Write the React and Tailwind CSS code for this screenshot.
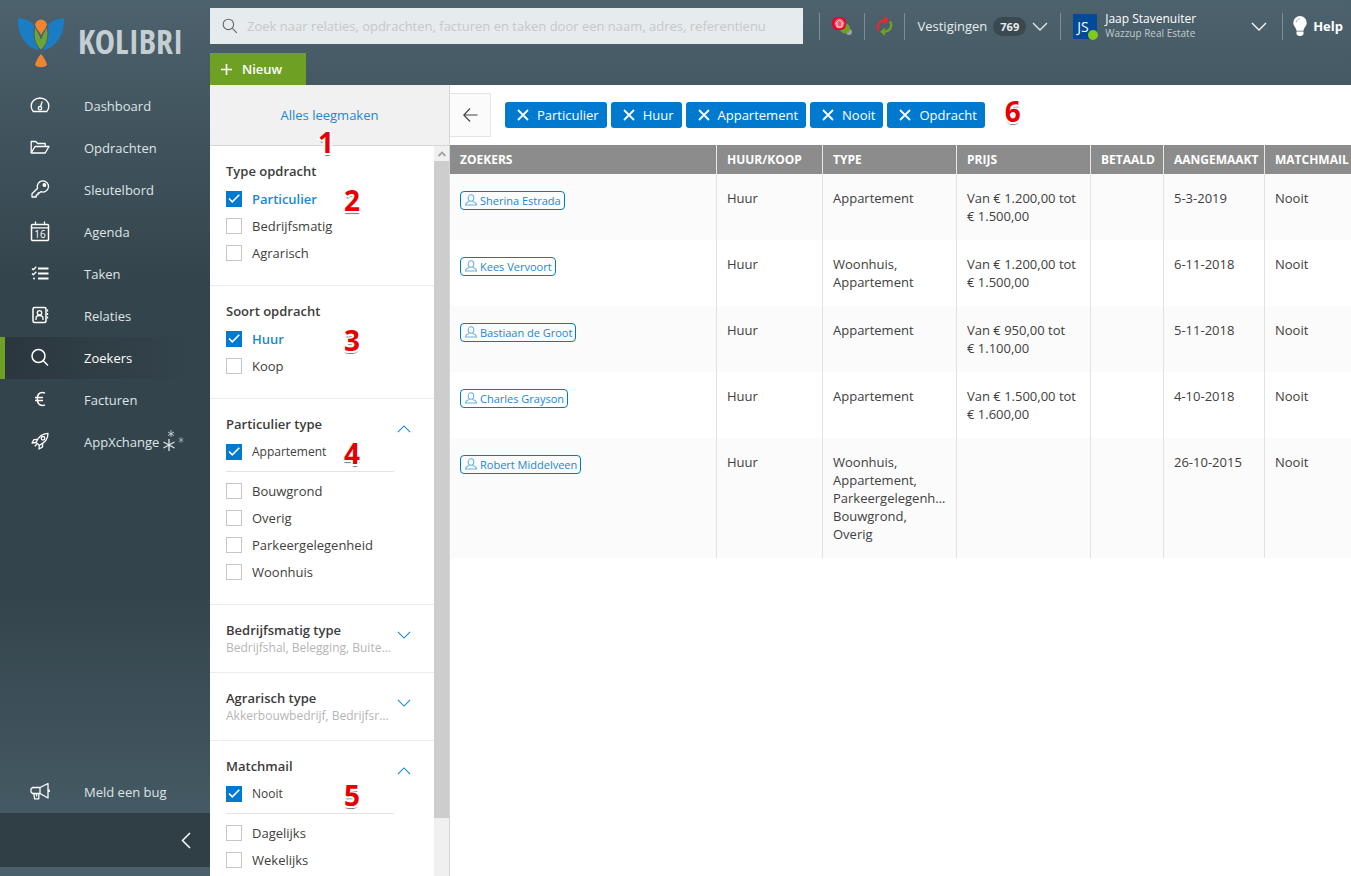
import { useState } from 'react';

const navItems = [
  { label: 'Dashboard', icon: 'dashboard' },
  { label: 'Opdrachten', icon: 'folder' },
  { label: 'Sleutelbord', icon: 'key' },
  { label: 'Agenda', icon: 'calendar' },
  { label: 'Taken', icon: 'tasks' },
  { label: 'Relaties', icon: 'contacts' },
  { label: 'Zoekers', icon: 'search' },
  { label: 'Facturen', icon: 'euro' },
  { label: 'AppXchange', icon: 'rocket' },
];

const filters = [
  { title: 'Type opdracht', options: ['Particulier', 'Bedrijfsmatig', 'Agrarisch'], highlight: true, note: 2 },
  { title: 'Soort opdracht', options: ['Huur', 'Koop'], highlight: true, note: 3 },
  { title: 'Particulier type', pinned: 'Appartement', options: ['Bouwgrond', 'Overig', 'Parkeergelegenheid', 'Woonhuis'], note: 4 },
  { title: 'Bedrijfsmatig type', summary: 'Bedrijfshal, Belegging, Buitenterrein, Horeca' },
  { title: 'Agrarisch type', summary: 'Akkerbouwbedrijf, Bedrijfsruimte, Tuinbouw' },
  { title: 'Matchmail', pinned: 'Nooit', options: ['Dagelijks', 'Wekelijks'], note: 5 },
];

const chips = ['Particulier', 'Huur', 'Appartement', 'Nooit', 'Opdracht'];

const seekers = [
  { name: 'Sherina Estrada', types: ['Appartement'], price: ['Van € 1.200,00 tot', '€ 1.500,00'], created: '5-3-2019' },
  { name: 'Kees Vervoort', types: ['Woonhuis,', 'Appartement'], price: ['Van € 1.200,00 tot', '€ 1.500,00'], created: '6-11-2018' },
  { name: 'Bastiaan de Groot', types: ['Appartement'], price: ['Van € 950,00 tot', '€ 1.100,00'], created: '5-11-2018' },
  { name: 'Charles Grayson', types: ['Appartement'], price: ['Van € 1.500,00 tot', '€ 1.600,00'], created: '4-10-2018' },
  { name: 'Robert Middelveen', types: ['Woonhuis,', 'Appartement,', 'Parkeergelegenheid,', 'Bouwgrond,', 'Overig'], price: [], created: '26-10-2015' },
];

const iconShapes = {
  dashboard: (
    <>
      <path d="M3.200 16.500A8.600 8.600 0 0 1 1.200 11a8.800 8 0 0 1 17.600 0 8.600 8.600 0 0 1-2 5.500z" />
      <circle cx="10" cy="13.200" r="1.700" />
      <path d="M10.600 11.500 12.200 6.500" />
    </>
  ),
  folder: (
    <>
      <path d="M1.200 16V4.500h4.500l2 2h7.500V9" />
      <path d="M1.200 16 5 9.500h14L15.200 16z" />
    </>
  ),
  key: (
    <>
      <path d="M7.600 9.200a5.600 5.600 0 1 1 3.200 3.400L9.500 14H8v1.800H6.200V18H2v-3.200z" />
      <circle cx="14.400" cy="6" r="1.300" fill="currentColor" />
    </>
  ),
  calendar: (
    <>
      <rect x="1.500" y="3.500" width="17" height="16" rx="1" strokeWidth="1.500" />
      <path d="M2 6.800h16M5.500.500v3M14.500.500v3" />
      <text x="10" y="17" fontSize="10" textAnchor="middle" fill="currentColor" stroke="none">16</text>
    </>
  ),
  tasks: (
    <>
      <path d="M8 5.500h10.500M8 10.500h10.500M8 15.500h10.500" strokeWidth="1.800" />
      <path d="m2 5.500 1.300 1.300 3-3M2 10.500l1.300 1.300 3-3" />
      <circle cx="4" cy="15.500" r="1" fill="currentColor" stroke="none" />
    </>
  ),
  contacts: (
    <>
      <rect x="3" y="2.500" width="13" height="15" rx="1.500" strokeWidth="1.500" />
      <circle cx="9.500" cy="7.800" r="2.200" />
      <path d="M6 15v-1.500c0-1.800 1.200-3 3.500-3s3.500 1.200 3.500 3V15M17.500 4.500v2M17.500 8v2M17.500 11.500v2" />
    </>
  ),
  search: (
    <>
      <circle cx="8.500" cy="9" r="6.500" strokeWidth="1.500" />
      <path d="m13.300 13.800 4.700 4.700" strokeWidth="1.500" />
    </>
  ),
  euro: <path d="M15 4.200a6 6 0 0 0-2.500-.6C9.300 3.600 7.300 6 7.300 10s2 6.400 5.200 6.400c1 0 1.800-.2 2.500-.6M5 8.500h8M5 11.500h8" strokeWidth="1.500" />,
  rocket: (
    <>
      <path d="M6 11.500C8 6.500 12 2.500 18 2.300c.1 5.500-3.700 9.700-8.700 12z" />
      <circle cx="13" cy="7.300" r="1.800" />
      <path d="M7.500 8.500 3.800 8.700 2 12l4-.5M9.300 14.300 9 18l3.500-2 .2-3.800M6.800 13.300l-2 2" />
    </>
  ),
  megaphone: (
    <>
      <path d="M2.500 6.500H10v6H2.500L1 11V8z" />
      <path d="M10 6.500 18 2.500v14.500l-8-4.500M3.800 12.500l.8 5.300h4.200v-5.300M6.500 12.500v3M19.200 8.500v2.500" />
    </>
  ),
};

const NavIcon = ({ name }) => (
  <svg viewBox="0 1 20 20" className="h-5 w-5 shrink-0 overflow-visible text-white" fill="none" stroke="currentColor" strokeWidth="1.3" strokeLinejoin="round" aria-hidden="true">
    {iconShapes[name]}
  </svg>
);

const chevronPaths = {
  down: 'm1 1 7 7 7-7',
  up: 'm1 8 7-7 7 7',
};

const Chevron = ({ direction = 'down', className }) => (
  <svg viewBox="0 0 16 9" className={className} fill="none" stroke="currentColor" strokeWidth="1.3" aria-hidden="true">
    <path d={chevronPaths[direction]} />
  </svg>
);

const Note = ({ value, className }) => (
  <span
    aria-hidden="true"
    className={`pointer-events-none absolute z-10 text-[28px] leading-7 font-bold text-[#e60000] [text-shadow:1px_0_#fff,-1px_0_#fff,0_1px_#fff,0_-1px_#fff,2px_1px_#fff,-2px_1px_#fff,1px_2px_#fff,-1px_2px_#fff,0_3px_1px_#777] ${className}`}
  >
    {value}
  </span>
);

const Logo = () => (
  <a href="#" className="flex h-[85px] items-center pl-[18px]" aria-label="Kolibri">
    <svg viewBox="0 0 46 52" className="h-[52px] w-[46px]" aria-hidden="true">
      <path d="M0 1c8 1 14 4 16 7-1 9 0 17 5 25C9 31-1 18 0 1z" fill="#1b7dc4" />
      <path d="M46 1c-8 1-14 4-16 7 1 9 0 17-5 25C37 31 47 18 46 1z" fill="#1b7dc4" />
      <path d="M17 8c1-7 11-7 12 0-1 4-4 6-6 10-2-4-5-6-6-10z" fill="#ee8532" />
      <path d="M17 9c-2 9-1 18 6 24 7-6 8-15 6-24-1 4-4 6-6 13-2-7-5-9-6-13z" fill="#6ba53a" stroke="#4a5f6a" strokeWidth="1" />
      <path d="M23 37c-3 3-5 7-6 11 3 3 9 3 12 0-1-4-3-8-6-11z" fill="#ee8532" />
    </svg>
    <span className="mb-1 ml-[14px] font-['Open_Sans_Condensed','Liberation_Sans_Narrow','Open_Sans',sans-serif] text-[34px] leading-9 font-bold text-[#c5ced3]">KOLIBRI</span>
  </a>
);

const Sidebar = () => (
  <aside className="flex w-[210px] shrink-0 flex-col">
    <Logo />
    <nav className="flex flex-1 flex-col">
      {navItems.map(item => (
        <a
          key={item.label}
          href="#"
          className={`flex h-[42px] items-center border-l-[5px] pl-[25px] ${item.label === 'Zoekers' ? 'border-[#6ea123] bg-linear-to-r from-[#2b373e] to-transparent to-90% text-white' : 'border-transparent text-[#dfe4e6]'}`}
        >
          <NavIcon name={item.icon} />
          <span className="ml-[34px]">{item.label}</span>
          {item.icon === 'rocket' && (
            <svg viewBox="0 0 22 24" className="ml-[3px] h-6 w-[22px]" fill="none" stroke="#dfe4e6" aria-hidden="true">
              <path d="M7 9v12M1.500 12l11 6M12.500 12l-11 6" strokeWidth="1.300" />
              <path d="M9 0v7M6 2l6 3.500M12 2 6 5.500" opacity=".8" />
              <path d="M19 7v6M16.500 8.500l5 3M21.500 8.500l-5 3" opacity=".5" />
            </svg>
          )}
        </a>
      ))}
      <a href="#" className="mt-auto flex h-[42px] items-center pl-[30px] text-[#dfe4e6]">
        <NavIcon name="megaphone" />
        <span className="ml-[34px]">Meld een bug</span>
      </a>
    </nav>
    <button aria-label="Menu inklappen" className="mb-[9px] flex h-[54px] items-center justify-end bg-[#303e45] pr-[19px] text-white">
      <svg viewBox="0 0 10 17" className="h-[17px] w-[10px]" fill="none" stroke="currentColor" strokeWidth="1.500" aria-hidden="true">
        <path d="m9 1-7.500 7.500L9 16" />
      </svg>
    </button>
  </aside>
);

const Divider = () => <div className="h-[27px] w-px bg-[#7d8c95]" />;

const Header = () => (
  <header className="h-[85px] shrink-0 pt-2">
    <div className="flex h-9 items-center">
      <label className="flex h-9 flex-1 items-center bg-[#e6ebee] pl-3">
        <svg viewBox="0 0 20 20" className="h-4 w-4 text-[#666]" fill="none" stroke="currentColor" strokeWidth="1.400" aria-hidden="true">
          <circle cx="8" cy="8" r="6.500" />
          <path d="m13 13 5.500 5.500" />
        </svg>
        <input
          type="text"
          aria-label="Zoeken"
          placeholder="Zoek naar relaties, opdrachten, facturen en taken door een naam, adres, referentienu"
          className="ml-[9px] min-w-0 flex-1 bg-transparent outline-none placeholder:text-[#c5c8ca]"
        />
      </label>
      <div className="flex items-center pr-2 pl-4 text-[#e8ecee]">
        <Divider />
        <button aria-label="Berichten" className="mx-3 h-5 w-5">
          <svg viewBox="0 0 20 20" aria-hidden="true">
            <circle cx="17" cy="16" r="3" fill="#9aa3a8" />
            <circle cx="13" cy="12.500" r="5" fill="#6ea123" />
            <rect x="0" y="1" width="14" height="13" rx="5.500" fill="#e2062c" />
            <circle cx="7.500" cy="7.500" r="5" fill="#ec5a6e" />
            <path d="m3.500 7.500 4-3.500 4 3.500M5 7v4h5V7" fill="none" stroke="#fff" strokeWidth=".8" />
          </svg>
        </button>
        <Divider />
        <button aria-label="Synchroniseren" className="mx-[11px] h-5 w-[17px]">
          <svg viewBox="0 0 17 20" fill="none" strokeWidth="2.400" aria-hidden="true">
            <path d="M3 14.500C.500 11 2 4.500 9 4.300" stroke="#e22a30" />
            <path d="M8 0v8.600l5-4.300z" fill="#e22a30" />
            <path d="M14 5.500c2.500 3.500 1 10-6 10.200" stroke="#6ea123" />
            <path d="M9 11.400V20l-5-4.300z" fill="#6ea123" />
          </svg>
        </button>
        <Divider />
        <button className="mx-3 flex items-center">
          <span>Vestigingen</span>
          <span className="mx-1.5 rounded-full bg-[#3a4850] px-[7px] text-[11px] leading-[19px] font-bold">769</span>
          <Chevron className="h-[9px] w-4" />
        </button>
        <Divider />
        <button className="mr-[15px] ml-3 flex w-[194px] items-center text-left">
          <span className="relative h-[25px] w-6 bg-[#004a99] pl-1 text-[14px] leading-[25px] text-white">
            JS
            <span className="absolute -right-px -bottom-px h-[10px] w-[10px] rounded-full bg-[#82c91e]" />
          </span>
          <span className="ml-2 flex-1">
            <span className="block text-[12px] leading-[14px] text-white">Jaap Stavenuiter</span>
            <span className="block text-[10px] leading-[14px] text-[#c3cacd]">Wazzup Real Estate</span>
          </span>
          <Chevron className="h-[9px] w-4 text-white" />
        </button>
        <Divider />
        <a href="#" className="ml-[10px] flex items-center gap-1.5 font-bold text-white">
          <svg viewBox="0 0 14 20" className="h-5 w-[14px]" fill="currentColor" aria-hidden="true">
            <path d="M7 0a6.700 6.700 0 0 0-6.700 6.700c0 3.300 2.700 4.500 3.200 8h7c.5-3.500 3.200-4.700 3.200-8A6.700 6.700 0 0 0 7 0zM3.500 15.500h7v2.300c0 1-1.200 2.200-3.500 2.200s-3.500-1.200-3.500-2.200z" />
            <path d="M3.200 6.500C3.400 4.500 4.800 3 7 2.800" fill="none" stroke="#8fa0a8" strokeWidth=".8" />
          </svg>
          Help
        </a>
      </div>
    </div>
    <button className="mt-[9px] flex h-8 w-24 items-center gap-[10px] bg-[#6ea123] pl-[11px] font-semibold text-white">
      <svg viewBox="0 0 12 12" className="h-[11px] w-[11px]" stroke="currentColor" strokeWidth="1.700" aria-hidden="true">
        <path d="M6 0v12M0 6h12" />
      </svg>
      Nieuw
    </button>
  </header>
);

const FilterOption = ({ label, checked, onChange, className = '' }) => (
  <label className={`flex h-[27px] items-center gap-[10px] pb-px ${className}`}>
    <span className="grid">
      <input type="checkbox" checked={checked} onChange={onChange} className="peer col-start-1 row-start-1 h-4 w-4 appearance-none border border-[#c6c6c6] bg-white checked:border-[#007acf] checked:bg-[#007acf]" />
      <svg viewBox="0 0 16 16" className="pointer-events-none invisible col-start-1 row-start-1 h-4 w-4 peer-checked:visible" fill="none" stroke="#fff" strokeWidth="1.600" aria-hidden="true">
        <path d="m3 7.500 3.300 3.300 7-7" />
      </svg>
    </span>
    {label}
  </label>
);

const FilterSection = ({ filter, selected, onToggle }) => (
  <section className={`relative border-b border-[#ececec] pt-4 pl-4 ${filter.summary ? 'pb-[15px]' : 'pb-[18px]'}`}>
    <div className="flex pr-[23px]">
      <div className="min-w-0 flex-1">
        <h3 className="leading-[18px] font-semibold text-[#3c3c3c]">{filter.title}</h3>
        {filter.summary && <p className="w-[166px] truncate text-[12px] leading-[18px] text-[#b5b5b5]">{filter.summary}</p>}
      </div>
      {!filter.highlight && (
        <button aria-label={filter.title} className="h-[18px] pt-[10px] text-[#1a87d7]">
          <Chevron direction={filter.summary ? 'down' : 'up'} className="h-2 w-[14px]" />
        </button>
      )}
    </div>
    {filter.pinned && (
      <div className="mt-1.5 mr-10 mb-1.5 border-b border-[#e3e3e3] pb-[5px]">
        <FilterOption label={filter.pinned} checked={selected.includes(filter.pinned)} onChange={() => onToggle(filter.pinned)} className="text-[12px]" />
      </div>
    )}
    {filter.options && (
      <div className={filter.pinned ? '' : 'mt-1.5'}>
        {filter.options.map(option => (
          <FilterOption
            key={option}
            label={option}
            checked={selected.includes(option)}
            onChange={() => onToggle(option)}
            className={filter.highlight && selected.includes(option) ? 'font-semibold text-[#1a87d7]' : ''}
          />
        ))}
      </div>
    )}
    {filter.note && <Note value={filter.note} className="top-10 left-[134px]" />}
  </section>
);

const FilterPanel = () => {
  const [selected, setSelected] = useState(['Particulier', 'Huur', 'Appartement', 'Nooit']);

  const handleToggle = (option) => {
    setSelected(selected.includes(option) ? selected.filter(o => o !== option) : [...selected, option]);
  };

  return (
    <div className="flex w-60 shrink-0 flex-col border-r border-[#d6d6d6] bg-white">
      <div className="relative flex h-[61px] shrink-0 items-center justify-center border-b border-[#d6d6d6] bg-[#f1f1f1]">
        <button onClick={() => setSelected([])} className="text-[#1a87d7]">Alles leegmaken</button>
        <Note value={1} className="top-[43px] left-[108px]" />
      </div>
      <div className="flex min-h-0 flex-1">
        <div className="min-w-0 flex-1 overflow-hidden">
          {filters.map(filter => (
            <FilterSection key={filter.title} filter={filter} selected={selected} onToggle={handleToggle} />
          ))}
        </div>
        <div className="flex w-[15px] flex-col bg-[#f0f0f0]">
          <div className="flex h-[15px] items-center justify-center text-[#a3a3a3]">
            <svg viewBox="0 0 8 6" className="h-1.5 w-2" fill="none" stroke="currentColor" strokeWidth="1.800" aria-hidden="true">
              <path d="m.5 5 3.500-3.500L7.500 5" />
            </svg>
          </div>
          <div className="h-[90%] bg-[#cdcdcd]" />
        </div>
      </div>
    </div>
  );
};

const SeekerTable = () => (
  <table className="w-full table-fixed border-separate border-spacing-0 text-left">
    <colgroup>
      <col />
      <col className="w-[106px]" />
      <col className="w-[134px]" />
      <col className="w-[134px]" />
      <col className="w-[73px]" />
      <col className="w-[101px]" />
      <col className="w-[86px]" />
    </colgroup>
    <thead className="bg-[#8c8c8c] text-[12px] text-white">
      <tr className="h-[29px] *:border-r *:border-[#e6e6e6] *:pl-[10px] *:font-bold *:whitespace-nowrap *:last:border-r-0">
        <th>ZOEKERS</th>
        <th>HUUR/KOOP</th>
        <th>TYPE</th>
        <th>PRIJS</th>
        <th>BETAALD</th>
        <th>AANGEMAAKT</th>
        <th>MATCHMAIL</th>
      </tr>
    </thead>
    <tbody className="leading-[18px]">
      {seekers.map(seeker => (
        <tr key={seeker.name} className="align-top odd:bg-[#fbfbfb] *:border-r *:border-[#e2e2e2] *:px-[10px] *:py-[15px] *:last:border-r-0">
          <td>
            <a href="#" className="mt-0.5 inline-flex h-[19px] items-center gap-0.5 rounded border border-[#007acf] px-[3px] text-[11px] text-[#1a87d7]">
              <svg viewBox="0 0 14 14" className="h-[14px] w-[14px]" fill="none" stroke="#6db1e4" strokeWidth="1.100" aria-hidden="true">
                <ellipse cx="7" cy="4" rx="2.800" ry="3.200" />
                <path d="M5.500 7.500c-3 .8-4 1.500-4 3.500h11c0-2-1-2.700-4-3.500" />
              </svg>
              {seeker.name}
            </a>
          </td>
          <td>Huur</td>
          <td>{seeker.types.map(type => <div key={type} className="truncate">{type}</div>)}</td>
          <td>{seeker.price.map(line => <div key={line}>{line}</div>)}</td>
          <td></td>
          <td>{seeker.created}</td>
          <td>Nooit</td>
        </tr>
      ))}
    </tbody>
  </table>
);

const Results = () => (
  <main className="min-w-0 flex-1 bg-white">
    <div className="flex h-[60px] items-center">
      <button aria-label="Terug" className="flex h-11 w-[41px] items-center justify-center border border-l-0 border-[#e3e3e3] bg-[#fbfbfb] text-[#444]">
        <svg viewBox="0 0 15 14" className="h-[14px] w-[15px]" fill="none" stroke="currentColor" strokeWidth="1.200" aria-hidden="true">
          <path d="M14.500 7H1M7 .500.800 7 7 13.500" />
        </svg>
      </button>
      <div className="ml-[14px] flex gap-1">
        {chips.map(chip => (
          <button key={chip} className="flex h-[26px] items-center gap-2 rounded-[3px] bg-[#007acf] pr-2 pl-3 text-white">
            <svg viewBox="0 0 12 12" className="h-3 w-3" stroke="currentColor" strokeWidth="1.800" aria-hidden="true">
              <path d="m1 1 10 10M11 1 1 11" />
            </svg>
            {chip}
          </button>
        ))}
      </div>
      <span className="relative ml-5 h-7 w-5">
        <Note value={6} className="-top-1 left-0" />
      </span>
    </div>
    <SeekerTable />
  </main>
);

const App = () => (
  <div className="flex h-screen overflow-hidden bg-[linear-gradient(#4c626d,#34444c_32%,#34444c_68%,#4a606b)] font-['Open_Sans',sans-serif] text-[13px] leading-5 text-[#404040]">
    <Sidebar />
    <div className="flex min-w-0 flex-1 flex-col">
      <Header />
      <div className="flex min-h-0 flex-1">
        <FilterPanel />
        <Results />
      </div>
    </div>
  </div>
);

export default App;
